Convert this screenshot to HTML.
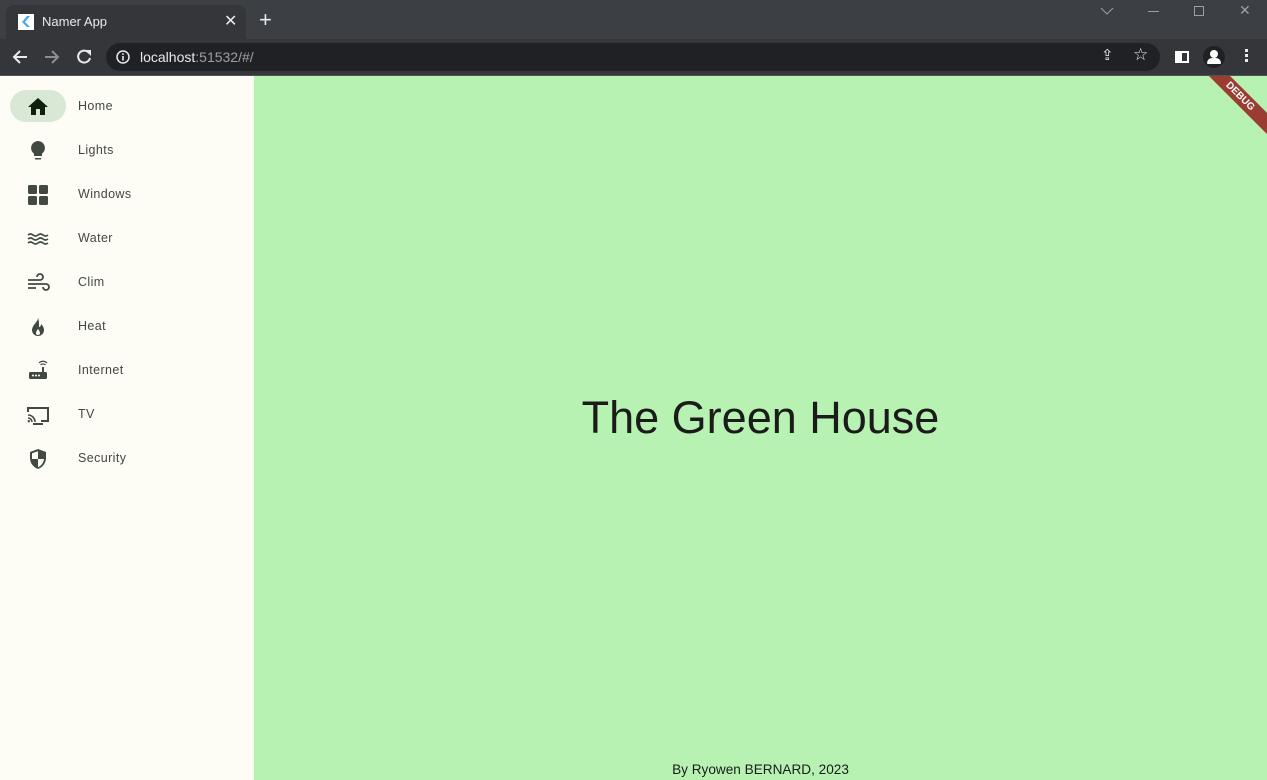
<!DOCTYPE html>
<html><head><meta charset="utf-8"><style>
*{margin:0;padding:0;box-sizing:border-box}
body{width:1267px;height:780px;overflow:hidden;font-family:"Liberation Sans",sans-serif;background:#fdfdf6;position:relative}
.tabs{position:absolute;left:0;top:0;width:1267px;height:40px;background:#3c3f43}
.tab{position:absolute;left:6px;top:5px;width:240px;height:35px;background:#35363a;border-radius:8px 8px 0 0}
.toolbar{position:absolute;left:0;top:39px;width:1267px;height:37px;background:#35363a;border-bottom:1px solid #505357}
.omni{position:absolute;left:106px;top:4px;width:1054px;height:28px;background:#202124;border-radius:14px}
.side{position:absolute;left:0;top:76px;width:254px;height:704px;background:#fdfdf6}
.main{position:absolute;left:254px;top:76px;width:1013px;height:704px;background:#b7f2b3;overflow:hidden}
.item{position:absolute;left:0;width:254px;height:44px}
.item svg{position:absolute;left:26px;top:10px}
.item span{position:absolute;left:78px;top:14px;font-size:12.5px;color:#444744;letter-spacing:.4px}
h1{position:absolute;left:0;width:1013px;top:316px;text-align:center;font-weight:400;font-size:45px;color:#1a1c19}
.foot{position:absolute;left:0;width:1013px;top:686px;text-align:center;font-size:13.6px;color:#1a1c19}
.debug{position:absolute;right:-28px;top:13px;width:110px;height:15px;background:#9a3c32;color:#fff;font-size:10px;font-weight:bold;text-align:center;line-height:15px;transform:rotate(45deg)}
</style></head><body>
<div class="tabs"><div class="tab">
<div style="position:absolute;left:12px;top:9px;width:16px;height:16px;background:#fff"><svg width="16" height="16"><path d="M9 2L4 8l5 5h3L7 8l5-6z" fill="#4aa8e8"/></svg></div>
<div style="position:absolute;left:36px;top:9px;font-size:13px;color:#e8eaed">Namer App</div>
<div style="position:absolute;left:218px;top:6px;font-size:16px;color:#e8eaed">✕</div>
</div>
<div style="position:absolute;left:259px;top:9px;font-size:22px;color:#e8eaed;line-height:22px">+</div>
<svg style="position:absolute;left:1100px;top:6px" width="14" height="10"><path d="M1 2l6 6 6-6" stroke="#9aa0a6" fill="none"/></svg>
<div style="position:absolute;left:1148px;top:11px;width:11px;height:1px;background:#9aa0a6"></div>
<div style="position:absolute;left:1194px;top:6px;width:10px;height:10px;border:1px solid #9aa0a6"></div>
<div style="position:absolute;left:1239px;top:2px;font-size:14px;color:#9aa0a6">✕</div>
</div>
<div class="toolbar">
<svg style="position:absolute;left:11px;top:9px" width="18" height="18"><path d="M16 9H3M9 3L3 9l6 6" stroke="#e8eaed" stroke-width="2" fill="none"/></svg>
<svg style="position:absolute;left:43px;top:9px" width="18" height="18"><path d="M2 9h13M9 3l6 6-6 6" stroke="#8a8d91" stroke-width="2" fill="none"/></svg>
<svg style="position:absolute;left:75px;top:9px" width="18" height="18"><path d="M14 5A6 6 0 1 0 15 10" stroke="#e8eaed" stroke-width="2" fill="none"/><path d="M10 2h6v6z" fill="#e8eaed"/></svg>
<div class="omni">
<svg style="position:absolute;left:10px;top:7px" width="14" height="14"><circle cx="7" cy="7" r="6" stroke="#e8eaed" stroke-width="1.5" fill="none"/><rect x="6.2" y="6" width="1.6" height="4.5" fill="#e8eaed"/><rect x="6.2" y="3.3" width="1.6" height="1.6" fill="#e8eaed"/></svg>
<div style="position:absolute;left:34px;top:6px;font-size:14px;color:#e8eaed">localhost<span style="color:#9aa0a6">:51532/#/</span></div>
<div style="position:absolute;left:995px;top:3px;font-size:15px;color:#e8eaed">⇪</div>
<div style="position:absolute;left:1027px;top:2px;font-size:17px;color:#e8eaed">☆</div>
</div>
<div style="position:absolute;left:1175px;top:12px;width:14px;height:12px;border:2px solid #fff;border-left-width:7px;background:#35363a"></div>
<div style="position:absolute;left:1203px;top:7px;width:22px;height:22px;border-radius:11px;background:#202124"><div style="position:absolute;left:7px;top:4px;width:8px;height:8px;border-radius:4px;background:#fff"></div><div style="position:absolute;left:4px;top:12px;width:14px;height:6px;border-radius:5px 5px 1px 1px;background:#fff"></div></div>
<div style="position:absolute;left:1245px;top:10px;width:3px;height:3px;background:#e8eaed;box-shadow:0 5px #e8eaed,0 10px #e8eaed"></div>
</div>
<div class="side">
<div style="position:absolute;left:10px;top:14px;width:56px;height:32px;border-radius:16px;background:#d8e8d4"></div>
<div class="item" style="top:9px"><svg width="24" height="24"><path d="M10 20v-6h4v6h5v-8h3L12 3 2 12h3v8z" fill="#0f200d"/></svg><span>Home</span></div>
<div class="item" style="top:53px"><svg width="24" height="24"><path d="M12 2a7 7 0 0 0-4 12.7V17h8v-2.3A7 7 0 0 0 12 2zM9 19h6v1.5H9z" fill="#424940"/></svg><span>Lights</span></div>
<div class="item" style="top:97px"><svg width="24" height="24"><rect x="2" y="2" width="9" height="9" rx="1.5" fill="#424940"/><rect x="13" y="2" width="9" height="9" rx="1.5" fill="#424940"/><rect x="2" y="13" width="9" height="9" rx="1.5" fill="#424940"/><rect x="13" y="13" width="9" height="9" rx="1.5" fill="#424940"/></svg><span>Windows</span></div>
<div class="item" style="top:141px"><svg width="24" height="24"><path d="M2 8q2.5-2 5 0t5 0 5 0 5 0M2 12q2.5-2 5 0t5 0 5 0 5 0M2 16q2.5-2 5 0t5 0 5 0 5 0" stroke="#424940" stroke-width="1.6" fill="none"/></svg><span>Water</span></div>
<div class="item" style="top:185px"><svg width="24" height="24"><path d="M2 9h12a3 3 0 1 0-3-3M2 13h18a3 3 0 1 1-3 3M2 17h8" stroke="#424940" stroke-width="1.8" fill="none"/></svg><span>Clim</span></div>
<div class="item" style="top:229px"><svg width="24" height="24"><path d="M12 3c0 4-6 7-6 12a6 6 0 0 0 12 0c0-3-2-5-3-6 0 2-1 3-2 3 0-4 0-7-1-9z" fill="#424940"/><path d="M12 14c-1 1.5-2 2.5-2 4a2 2 0 0 0 4 0c0-1.5-1-2.5-2-4z" fill="#fdfdf6"/></svg><span>Heat</span></div>
<div class="item" style="top:273px"><svg width="24" height="24"><rect x="3" y="13" width="18" height="7" rx="1.5" fill="#424940"/><rect x="16" y="8" width="2" height="5" fill="#424940"/><circle cx="7" cy="16.5" r="1" fill="#fdfdf6"/><circle cx="10" cy="16.5" r="1" fill="#fdfdf6"/><circle cx="13" cy="16.5" r="1" fill="#fdfdf6"/><path d="M14.5 6a3.5 3.5 0 0 1 5 0M13 4a5.5 5.5 0 0 1 8 0" stroke="#424940" stroke-width="1.2" fill="none"/></svg><span>Internet</span></div>
<div class="item" style="top:317px"><svg width="24" height="24"><path d="M2 9V5h20v13h-7" stroke="#424940" stroke-width="2" fill="none"/><path d="M2 12a7 7 0 0 1 7 7M2 15a4 4 0 0 1 4 4" stroke="#424940" stroke-width="1.6" fill="none"/><circle cx="2.8" cy="18.2" r="1.2" fill="#424940"/><rect x="7" y="20" width="10" height="2" fill="#424940"/></svg><span>TV</span></div>
<div class="item" style="top:361px"><svg width="24" height="24"><path d="M12 2l8 3v6c0 5-3.5 9.5-8 11-4.5-1.5-8-6-8-11V5z" fill="#424940"/><path d="M12 4.2v7.8H6V6.2zM12 12h6c-.5 4-3 7-6 8.3z" fill="#fdfdf6"/></svg><span>Security</span></div>
</div>
<div class="main">
<h1>The Green House</h1>
<div class="foot">By Ryowen BERNARD, 2023</div>
<div class="debug">DEBUG</div>
</div>
</body></html>
